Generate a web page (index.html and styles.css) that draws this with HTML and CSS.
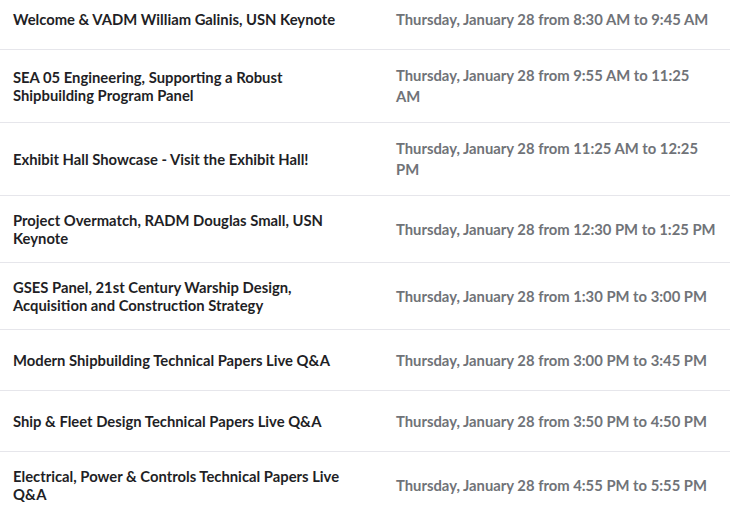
FILE: index.html
```html
<!DOCTYPE html>
<html lang="en">
<head>
<meta charset="utf-8">
<title>Agenda</title>
<link rel="stylesheet" href="styles.css">
</head>
<body>
<div class="agenda">
  <div class="row">
    <div class="title">Welcome &amp; VADM William Galinis, USN Keynote</div>
    <div class="time">Thursday, January 28 from 8:30 AM to 9:45 AM</div>
  </div>
  <div class="row">
    <div class="title">SEA 05 Engineering, Supporting a Robust Shipbuilding Program Panel</div>
    <div class="time">Thursday, January 28 from 9:55 AM to 11:25 AM</div>
  </div>
  <div class="row">
    <div class="title">Exhibit Hall Showcase - Visit the Exhibit Hall!</div>
    <div class="time">Thursday, January 28 from 11:25 AM to 12:25 PM</div>
  </div>
  <div class="row">
    <div class="title">Project Overmatch, RADM Douglas Small, USN Keynote</div>
    <div class="time">Thursday, January 28 from 12:30 PM to 1:25 PM</div>
  </div>
  <div class="row">
    <div class="title">GSES Panel, 21st Century Warship Design, Acquisition and Construction Strategy</div>
    <div class="time">Thursday, January 28 from 1:30 PM to 3:00 PM</div>
  </div>
  <div class="row">
    <div class="title">Modern Shipbuilding Technical Papers Live Q&amp;A</div>
    <div class="time">Thursday, January 28 from 3:00 PM to 3:45 PM</div>
  </div>
  <div class="row">
    <div class="title">Ship &amp; Fleet Design Technical Papers Live Q&amp;A</div>
    <div class="time">Thursday, January 28 from 3:50 PM to 4:50 PM</div>
  </div>
  <div class="row">
    <div class="title">Electrical, Power &amp; Controls Technical Papers Live Q&amp;A</div>
    <div class="time">Thursday, January 28 from 4:55 PM to 5:55 PM</div>
  </div>
</div>
</body>
</html>
```
FILE: styles.css
```css
html, body {
  margin: 0;
  padding: 0;
  background: #ffffff;
}
body {
  font-family: "Lato", "Liberation Sans", sans-serif;
  font-weight: 700;
  font-size: 14.8px;
  -webkit-font-smoothing: antialiased;
}
.agenda {
  width: 730px;
  margin-top: -11px;
}
.row {
  display: grid;
  grid-template-columns: 383px 1fr;
  align-items: center;
  min-height: 61px;
  padding: 15px 0;
  box-sizing: border-box;
  border-bottom: 1px solid #e6e6eb;
}
.row:last-child {
  border-bottom: none;
}
.title {
  padding: 0 35px 0 13px;
  color: #1f1f26;
  line-height: 18px;
}
.time {
  padding-left: 13px;
  width: 320px;
  color: #707378;
  line-height: 21px;
}
```
